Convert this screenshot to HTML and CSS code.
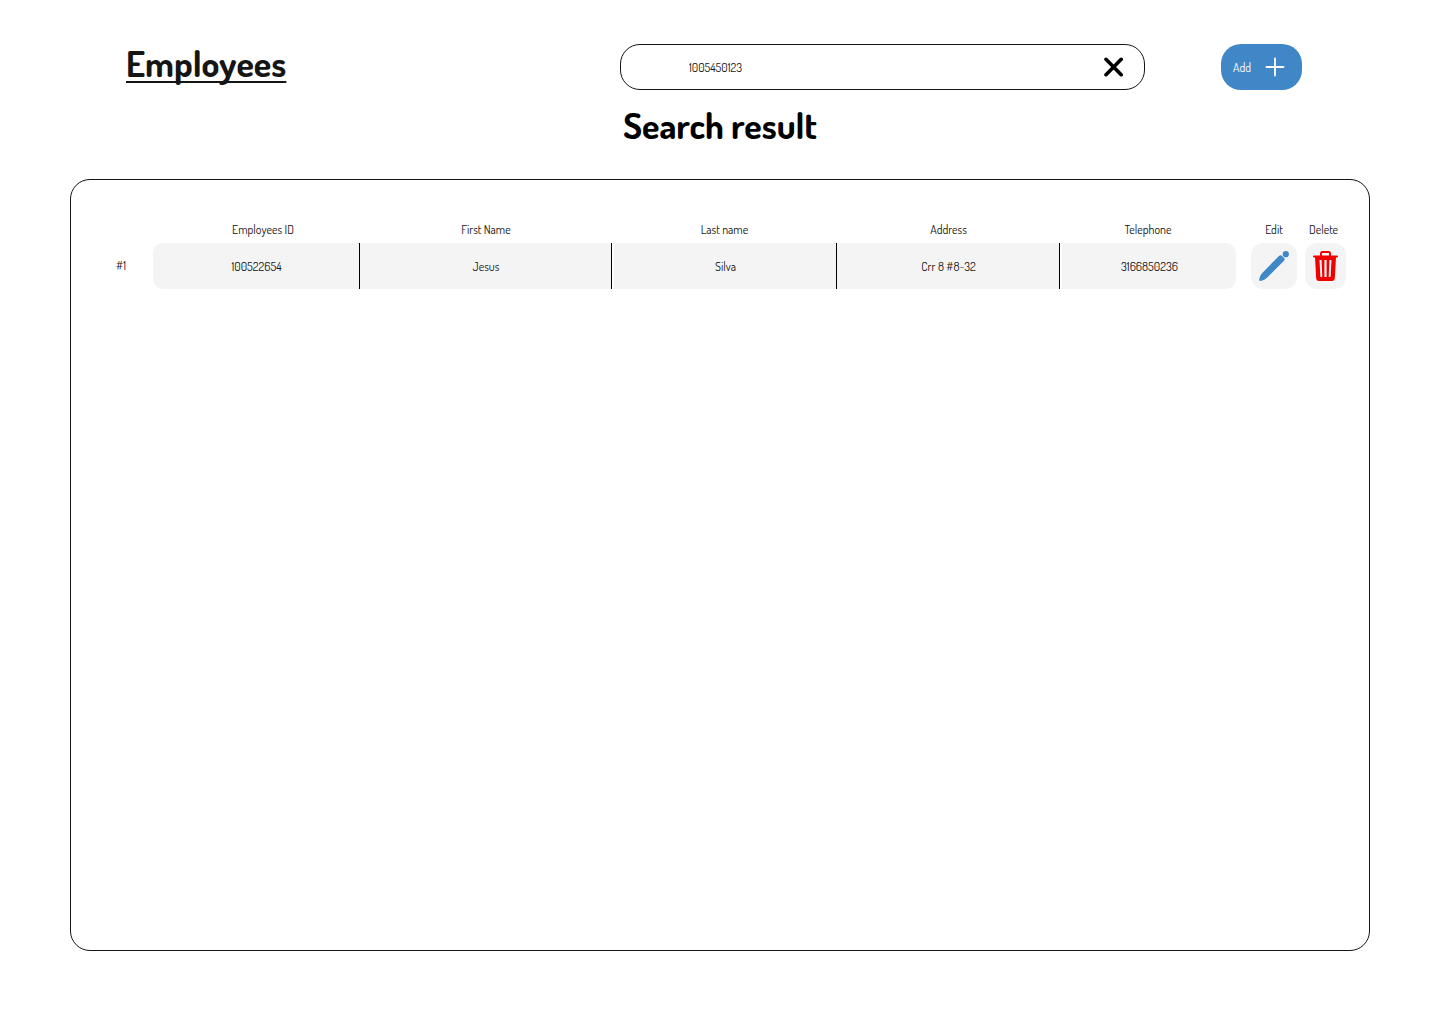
FILE: index.html
```html
<!DOCTYPE html>
<html lang="en">
<head>
  <meta charset="utf-8">
  <meta name="viewport" content="width=device-width, initial-scale=1">
  <title>Employees</title>
  <link rel="stylesheet" href="styles.css">
</head>
<body class="page">
  <header class="topbar">
    <h1 class="title">Employees</h1>
    <form class="search" role="search">
      <input class="search-input" type="text" value="1005450123" aria-label="Search employees">
      <button class="clear" type="reset" aria-label="Clear search">
        <svg width="20" height="20" viewBox="0 0 20 20" fill="none" stroke="#000" stroke-width="3.6" stroke-linecap="round"><path d="M2 2.3 17.2 17.7M17.2 2.3 2 17.7"/></svg>
      </button>
    </form>
    <button class="add" type="button">
      <span class="add-label">Add</span>
      <svg width="20" height="20" viewBox="0 0 20 20" fill="none" stroke="#fff" stroke-width="1.8" stroke-linecap="round"><path d="M10 1.5v17M1.5 10h17"/></svg>
    </button>
  </header>
  <h2 class="subtitle">Search result</h2>
  <main class="panel">
    <table class="employees">
      <colgroup>
        <col class="col-index">
        <col class="col-id">
        <col class="col-first">
        <col class="col-last">
        <col class="col-address">
        <col class="col-phone">
        <col class="col-edit">
        <col class="col-delete">
      </colgroup>
      <thead>
        <tr>
          <td></td>
          <th scope="col" class="id-head">Employees ID</th>
          <th scope="col">First Name</th>
          <th scope="col">Last name</th>
          <th scope="col">Address</th>
          <th scope="col">Telephone</th>
          <th scope="col" class="edit-cell">Edit</th>
          <th scope="col" class="delete-head">Delete</th>
        </tr>
      </thead>
      <tbody>
        <tr>
          <th scope="row">#1</th>
          <td class="data first">100522654</td>
          <td class="data">Jesus</td>
          <td class="data spaced">Silva</td>
          <td class="data">Crr 8 #8-32</td>
          <td class="data spaced last">3166850236</td>
          <td class="edit-cell">
            <button class="action" type="button" aria-label="Edit employee">
              <svg width="30" height="30" viewBox="0 0 30 30" fill="#3f87c6"><path d="M20.2 4.8Q21.6 3.6 23 5L25 7Q26.3 8.4 25 9.8L8.5 26.3C6 28.8 3.5 29.7 1.6 29.9.4 30 0 29.4.2 28.4.6 26.4 1.6 23.6 4 21.2Z"/><circle cx="26.8" cy="3.2" r="3.1"/></svg>
            </button>
          </td>
          <td class="delete-cell">
            <button class="action" type="button" aria-label="Delete employee">
              <svg width="25" height="30" viewBox="0 0 25 30" fill="none" stroke="#f00000"><path d="M8 5V2.2Q8 1 9.2 1h6.6Q17 1 17 2.2V5" stroke-width="1.9"/><path d="M1 5.5h23" stroke-width="2" stroke-linecap="round"/><path fill="#f00000" stroke="none" fill-rule="evenodd" d="M2 6h21L21.8 27.6Q21.6 30 19.4 30H5.6Q3.4 30 3.2 27.6ZM6.5 9 7.4 26H9.3L8.6 9ZM11.4 9V26H13.6V9ZM16.4 9 15.7 26H17.6L18.5 9Z"/></svg>
            </button>
          </td>
        </tr>
      </tbody>
    </table>
  </main>
</body>
</html>
```
FILE: styles.css
```css
* {
  box-sizing: border-box;
}

.page {
  display: flex;
  flex-direction: column;
  min-height: 100vh;
  margin: 0;
  padding: 44px 70px 73px;
  background: #fff;
  color: #151515;
  font-family: Dosis, Lato, sans-serif;
  font-size: 12px;
  line-height: 16px;
}

button,
input {
  padding: 0;
  border: 0;
  background: none;
  color: inherit;
  font: inherit;
}

button {
  cursor: pointer;
}

svg {
  display: block;
}

.topbar {
  display: flex;
  align-items: center;
  padding: 0 68px 0 56px;
}

.title,
.subtitle {
  margin: 0;
  font-size: 36px;
  font-weight: 700;
  line-height: 38px;
}

.title {
  align-self: flex-start;
  margin-right: auto;
  text-decoration: underline;
  text-decoration-thickness: 2px;
  text-decoration-skip-ink: none;
  text-underline-offset: 4px;
}

.search {
  display: flex;
  align-items: center;
  width: 45%;
  max-width: 525px;
  height: 46px;
  margin-right: 76px;
  padding: 0 20px 0 68px;
  border: 1px solid #151515;
  border-radius: 20px;
}

.search-input {
  flex: 1;
  min-width: 0;
  padding-top: 2px;
  outline: 0;
}

.add {
  display: flex;
  align-items: center;
  gap: 14px;
  height: 46px;
  padding: 0 17px 0 12px;
  border-radius: 20px;
  background: #3f87c6;
  color: #fff;
}

.add-label {
  padding-top: 2px;
}

.subtitle {
  margin: 16px 0 35px;
  color: #000;
  text-align: center;
}

.panel {
  flex: 1;
  padding: 42px 23px 42px 18px;
  border: 1px solid #151515;
  border-radius: 20px;
}

.employees {
  width: 100%;
  table-layout: fixed;
  border-collapse: separate;
  border-spacing: 0;
  text-align: center;
}

.employees th,
.employees td {
  padding: 0;
  font-weight: 400;
}

.employees thead th {
  padding-bottom: 5px;
}

.col-index { width: 64px; }
.col-id { width: 207px; }
.col-first { width: 252px; }
.col-last { width: 225px; }
.col-address { width: 223px; }
.col-phone { width: 176px; }
.col-edit { width: 61px; }
.col-delete { width: 49px; }

.employees .data {
  height: 46px;
  padding: 2px 0 0 1px;
  border-right: 1px solid #000;
  background: #f4f4f4;
}

.employees .spaced {
  border-left: 2px solid #fff;
}

.employees .first {
  border-radius: 10px 0 0 10px;
}

.employees .last {
  border-right: 0;
  border-radius: 0 10px 10px 0;
}

.employees .id-head {
  padding-left: 13px;
}

.employees .edit-cell {
  padding-left: 15px;
}

.employees .delete-head {
  padding-left: 4px;
}

.employees .delete-cell {
  padding-left: 8px;
}

.action {
  display: flex;
  align-items: center;
  justify-content: center;
  width: 100%;
  height: 46px;
  border-radius: 12px;
  background: #f4f4f4;
}
```
